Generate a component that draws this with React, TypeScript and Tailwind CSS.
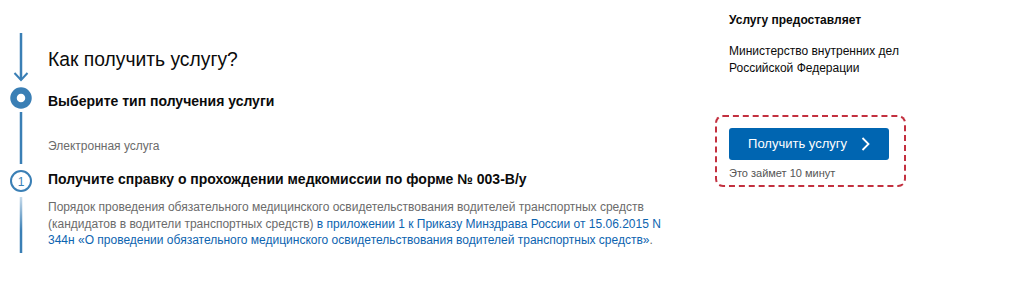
const lineBlue = '#3a7fb5';

function Timeline() {
  return (
    <svg width="48" height="260" viewBox="0 0 48 260" className="shrink-0" aria-hidden="true">
      <defs>
        <linearGradient id="fade" x1="0" y1="0" x2="0" y2="1">
          <stop offset="0" stopColor="#c7dbeb" />
          <stop offset="0.6" stopColor={lineBlue} />
          <stop offset="1" stopColor={lineBlue} />
        </linearGradient>
      </defs>
      <line x1="21" y1="33" x2="21" y2="80" stroke={lineBlue} strokeWidth="2.5" />
      <polyline points="14.5,73 21,80 27.5,73" fill="none" stroke={lineBlue} strokeWidth="2" />
      <circle cx="21" cy="98" r="7.5" fill="#fff" stroke={lineBlue} strokeWidth="6.5" />
      <line x1="21" y1="112" x2="21" y2="164" stroke={lineBlue} strokeWidth="2.5" />
      <circle cx="21" cy="181" r="10" fill="#fff" stroke={lineBlue} strokeWidth="2" />
      <text
        x="21"
        y="185.5"
        textAnchor="middle"
        fontSize="12"
        fill={lineBlue}
        fontFamily="'Liberation Sans', Arial, sans-serif"
      >
        1
      </text>
      <rect x="19.75" y="197" width="2.5" height="56" fill="url(#fade)" />
    </svg>
  );
}

export default function App() {
  return (
    <div className="flex w-[1025px] h-[285px] bg-white font-['Liberation_Sans',Arial,sans-serif] text-[#0b0b0b]">
      <div className="flex w-[715px]">
        <Timeline />
        <div className="w-[650px] pt-[48px]">
          <h1 className="text-[19.3px] leading-[24px] font-normal">Как получить услугу?</h1>
          <h2 className="mt-[20px] text-[14px] leading-[18px] font-bold">Выберите тип получения услуги</h2>
          <p className="mt-[28px] text-[12px] leading-[16px] text-[#6b6b6b]">Электронная услуга</p>
          <h2 className="mt-[16px] text-[14px] leading-[18px] font-bold">
            Получите справку о прохождении медкомиссии по форме № 003-В/у
          </h2>
          <p className="mt-[11px] whitespace-nowrap text-[12px] leading-[16.5px] text-[#6b6b6b]">
            Порядок проведения обязательного медицинского освидетельствования водителей транспортных средств
            <br />
            (кандидатов в водители транспортных средств){' '}
            <a href="#" className="text-[#0d64b0]">
              в приложении 1 к Приказу Минздрава России от 15.06.2015 N
              <br />
              344н «О проведении обязательного медицинского освидетельствования водителей транспортных средств»
            </a>
            .
          </p>
        </div>
      </div>

      <aside className="w-[191px] pt-[12px]">
        <div className="pl-[14px]">
          <h3 className="text-[12px] leading-[16px] font-bold">Услугу предоставляет</h3>
          <p className="mt-[15px] text-[12px] leading-[17px]">
            Министерство внутренних дел
            <br />
            Российской Федерации
          </p>
        </div>

        <div className="mt-[38px] rounded-[8px] border-2 border-dashed border-[#c3303f] pl-[12px] pt-[11px] pb-[5px]">
          <button
            type="button"
            className="flex h-[32px] w-[160px] items-center justify-center gap-[14px] rounded-[3px] bg-[#0065b1] text-[13px] text-white"
          >
            Получить услугу
            <svg width="9" height="14" viewBox="0 0 9 14" fill="none" aria-hidden="true">
              <polyline points="1.5,1 7.5,7 1.5,13" stroke="#fff" strokeWidth="1.8" />
            </svg>
          </button>
          <p className="mt-[6px] text-[11px] leading-[14px] text-[#555]">Это займет 10 минут</p>
        </div>
      </aside>
    </div>
  );
}
